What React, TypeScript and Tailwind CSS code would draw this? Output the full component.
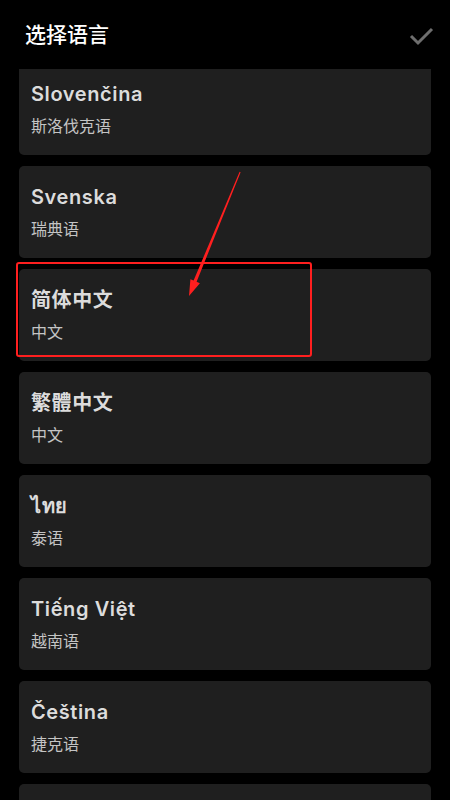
import React from 'react';

type Lang = { name: string; sub: string };

const langs: Lang[] = [
  { name: 'Slovenčina', sub: '斯洛伐克语' },
  { name: 'Svenska', sub: '瑞典语' },
  { name: '简体中文', sub: '中文' },
  { name: '繁體中文', sub: '中文' },
  { name: 'ไทย', sub: '泰语' },
  { name: 'Tiếng Việt', sub: '越南语' },
  { name: 'Čeština', sub: '捷克语' },
];

const font = { fontFamily: 'Inter, "Noto Sans", "Noto Sans CJK SC", sans-serif' };

const LangCard: React.FC<{ lang: Lang }> = ({ lang }) => (
  <div className="h-[92px] shrink-0 rounded-[5px] bg-[#1f1f1f] px-3 pt-[17px]">
    <p className="text-[20px] font-semibold leading-[28px] tracking-[0.6px] text-[#dcdcdc]">{lang.name}</p>
    <p className="mt-[7px] text-[16px] leading-[22px] text-[#c4c4c4]">{lang.sub}</p>
  </div>
);

const App: React.FC = () => {
  return (
    <div className="relative flex h-[800px] w-[450px] flex-col overflow-hidden bg-black" style={font}>
      <div className="flex h-[69px] shrink-0 items-start justify-between pl-[25px] pr-[16px] pt-[21px]">
        <h1 className="text-[21px] font-medium leading-[28px] text-white">选择语言</h1>
        <svg width="26" height="22" viewBox="0 0 26 22" className="mt-[4px]">
          <path d="M3 11 L10 18 L24 4" fill="none" stroke="#6e6e6e" strokeWidth="3" />
        </svg>
      </div>

      <div className="flex-1 overflow-hidden px-[19px]">
        <div className="-mt-[6px] flex flex-col gap-[11px]">
          {langs.map((l) => (
            <LangCard key={l.name} lang={l} />
          ))}
          {/* next item, only its top edge is on screen */}
          <div className="h-[92px] shrink-0 rounded-[5px] bg-[#1f1f1f]" />
        </div>
      </div>

      {/* annotation overlay */}
      <div className="absolute left-[16px] top-[262px] h-[95px] w-[296px] rounded-[3px] border-2 border-[#ff1f1f]" />
      <svg className="absolute left-0 top-0" width="450" height="800" viewBox="0 0 450 800">
        <polygon
          points="240,172 240.6,172.3 196.6,281.8 199.9,283.2 189,296 190.4,279.2 193.6,280.5 239.6,171.8"
          fill="#ff1f1f"
        />
      </svg>
    </div>
  );
};

export default App;
